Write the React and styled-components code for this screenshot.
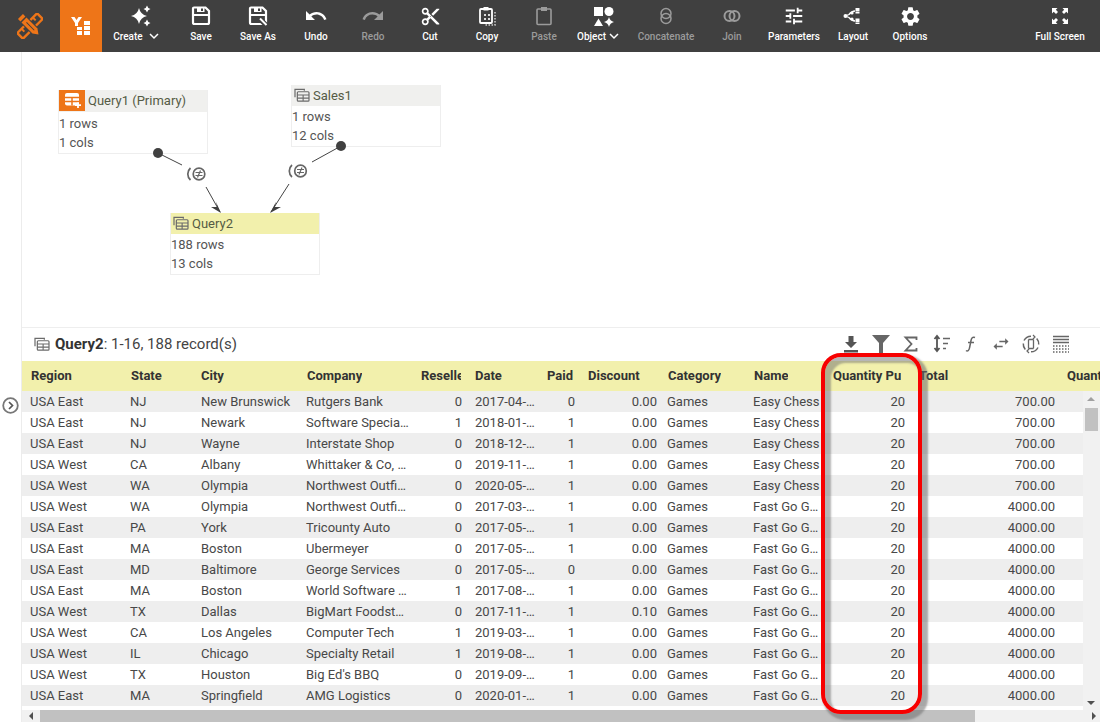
import React from 'react';
import styled, { createGlobalStyle } from 'styled-components';
import { MdUndo, MdRedo, MdContentCut, MdTune, MdSettings, MdSwapHoriz } from 'react-icons/md';

const Global = createGlobalStyle`
  html, body { margin: 0; padding: 0; background: #fff; }
  body { font-family: Roboto, "Liberation Sans", sans-serif; }
  * { box-sizing: border-box; }
`;

const Page = styled.div`
  position: relative; width: 1100px; height: 722px; overflow: hidden; display: flex; flex-direction: column;
`;
const Toolbar = styled.header`
  height: 52px; flex: none; background: #404040; display: flex; align-items: stretch;
`;
const LogoBox = styled.div`
  width: 60px; display: flex; align-items: center; justify-content: center;
`;
const HomeTab = styled.div`
  width: 42px; background: #ee7518; display: flex; align-items: center; justify-content: center;
`;
const Tool = styled.div`
  width: ${p => p.$w}px; flex: none; display: flex; flex-direction: column; align-items: center; padding-top: 5px;
  color: ${p => (p.$off ? '#9b9b9b' : '#fff')};
`;
const ToolIcon = styled.div`
  height: 22px; display: flex; align-items: center; justify-content: center; margin-left: ${p => p.$shift || 0}px;
`;
const ToolLabel = styled.div`
  margin-top: 2px; font-size: 10px; font-weight: 500; line-height: 15px; white-space: nowrap; display: flex; align-items: center; gap: ${p => p.$gap || 0}px;
`;
const Spacer = styled.div`flex: 1;`;
const Body = styled.div`flex: 1; display: flex; min-height: 0;`;
const Rail = styled.div`
  width: 22px; flex: none; border-right: 1px solid #ececec; position: relative;
`;
const RailToggle = styled.div`
  position: absolute; left: 2px; top: 345px; width: 17px; height: 17px; display: flex;
`;
const Main = styled.div`flex: 1; min-width: 0; display: flex; flex-direction: column;`;
const Canvas = styled.div`position: relative; height: 275px; flex: none;`;
const EdgeLayer = styled.svg`position: absolute; left: 0; top: 0; width: 100%; height: 100%; pointer-events: none;`;
const Node = styled.div`
  position: absolute; left: ${p => p.$x}px; top: ${p => p.$y}px; width: 150px;
  border: 1px solid #eeeeee; border-top: 0; background: #fff; font-size: 13px; color: #555;
  padding-bottom: 1px;
`;
const NodeHead = styled.div`
  height: ${p => p.$h}px; background: ${p => (p.$active ? '#f2f0ac' : '#f0f0ee')};
  display: flex; align-items: center; color: #555b45; line-height: 21px; padding-bottom: 1px;
  margin-bottom: ${p => p.$after}px;
`;
const NodeIconSlot = styled.div`
  width: ${p => (p.$orange ? 26 : 20)}px; height: 21px; flex: none; display: flex; align-items: center; justify-content: center;
  margin-right: ${p => (p.$orange ? 3 : 1)}px;
  background: ${p => (p.$orange ? '#ee7518' : 'transparent')};
`;
const NodeLine = styled.div`height: 19px; line-height: 19px;`;
const GridPanel = styled.section`flex: 1; min-height: 0; border-top: 1px solid #eeeeee; display: flex; flex-direction: column;`;
const TitleRow = styled.div`
  height: 33px; flex: none; display: flex; align-items: center; padding: 0 29px 2px 12px;
`;
const TitleText = styled.div`
  margin-left: 5px; font-size: 15px; color: #444; b { font-weight: 700; color: #333; }
`;
const GridTools = styled.div`margin-left: auto; display: flex; gap: 10px; color: #666;`;
const GridTool = styled.div`width: 20px; height: 20px; display: flex; align-items: center; justify-content: center;`;

const cols = '100px 71px 105px 115px 54px 72px 41px 79px 86px 80px 86px 149px 60px';
const HeadRow = styled.div`
  height: 30px; flex: none; background: #f2f0ac; display: grid; grid-template-columns: ${cols}; overflow: hidden;
  align-items: center; font-size: 13px; font-weight: 700; color: #333; padding-bottom: 2px;
`;
const HeadCell = styled.div`
  padding-left: ${p => p.$pl}px; padding-right: ${p => p.$pr}px; display: flex; min-width: 0;
`;
const HeadText = styled.span`
  white-space: nowrap; overflow: hidden; min-width: 0;
`;
const DataArea = styled.div`flex: 1; display: flex; min-height: 0;`;
const Rows = styled.div`flex: 1; min-width: 0;`;
const Row = styled.div`
  height: 21px; display: grid; grid-template-columns: ${cols}; background: ${p => (p.$odd ? '#eeeeee' : '#fff')};
  font-size: 13px; line-height: 21px; color: #484848;
`;
const Cell = styled.div`
  padding: 0 ${p => (p.$pr !== undefined ? p.$pr : 5)}px 0 8px; white-space: nowrap; overflow: hidden; text-overflow: ellipsis;
  text-align: ${p => (p.$num ? 'right' : 'left')};
`;
const VScroll = styled.div`
  width: 17px; flex: none; background: #f1f1f1; position: relative; margin-bottom: 4px; height: 319px;
`;
const VThumb = styled.div`
  position: absolute; left: 2px; top: 17px; width: 13px; height: 23px; background: #c1c1c1;
`;
const Arrow = styled.div`
  position: absolute; width: 0; height: 0; border-style: solid; border-color: transparent;
`;
const UpArrow = styled(Arrow)`left: 4px; top: 6px; border-width: 0 4px 4px; border-bottom-color: #a0a0a0;`;
const DownArrow = styled(Arrow)`left: 4px; bottom: 5px; border-width: 4px 4px 0; border-top-color: #505050;`;
const HScroll = styled.div`
  height: 12px; flex: none; background: #f1f1f1; position: relative; margin-top: -1px;
`;
const HThumb = styled.div`position: absolute; left: 18px; top: 0; width: 935px; height: 12px; background: #c1c1c1;`;
const LeftArrow = styled(Arrow)`left: 7px; top: 2px; border-width: 4px 4px 4px 0; border-right-color: #505050;`;
const RightArrow = styled(Arrow)`right: 4px; top: 2px; border-width: 4px 0 4px 4px; border-left-color: #505050;`;
const Callout = styled.div`
  position: absolute; left: 821px; top: 353px; width: 101px; height: 361px; border: 4px solid #f70000; border-radius: 20px;
  box-shadow: 4px 4px 2px 2px rgba(110,110,110,.55), inset 5px 5px 2px 1px rgba(110,110,110,.5);
  pointer-events: none;
`;

const Star = ({ cx, cy, r }) => (
  <path d={`M${cx} ${cy - r}Q${cx + r * .18} ${cy - r * .18} ${cx + r} ${cy}Q${cx + r * .18} ${cy + r * .18} ${cx} ${cy + r}Q${cx - r * .18} ${cy + r * .18} ${cx - r} ${cy}Q${cx - r * .18} ${cy - r * .18} ${cx} ${cy - r}Z`} fill="currentColor" />
);
const I = ({ s = 22, children, v = 24 }) => <svg width={s} height={s} viewBox={`0 0 ${v} ${v}`} fill="none">{children}</svg>;

const Logo = () => (
  <svg width="26" height="26" viewBox="0 0 26 26" fill="none">
    <g transform="rotate(45 13 13)" stroke="#ee7518" strokeWidth="2.400">
      <path d="M9 -1h8v28H9z" />
      <path d="M9 5h4M9 13h4M9 21h4" strokeWidth="2" />
    </g>
    <g transform="rotate(45 13 13)">
      <path d="M3 9.500H20l6 3.500-6 3.500H3z" fill="#404040" />
    </g>
    <g transform="rotate(-45 13 13)">
      <path d="M8.500 -1h9v21l-4.500 6-4.500-6z" fill="#404040" />
      <rect x="9.500" y="-0.500" width="7" height="3.500" fill="#ee7518" />
      <path d="M9.500 4.500h7V20l-3.500 5-3.500-5z" fill="#ee7518" />
      <path d="M13 8v11" stroke="#404040" strokeWidth="1" />
    </g>
  </svg>
);
const HomeIcon = () => (
  <svg width="22" height="20" viewBox="0 0 22 20">
    <rect x="14" y="5" width="6" height="4" fill="#fff" /><rect x="14" y="10" width="6" height="4" fill="#fff" /><rect x="14" y="15" width="6" height="4" fill="#fff" />
    <rect x="7" y="11" width="5" height="3" fill="#fff" /><rect x="7" y="15" width="5" height="4" fill="#fff" />
    <path d="M1 1h3.500l2 3 2-3H12L8 7v3H5V7z" fill="#fff" />
  </svg>
);
const Sparkles = () => (
  <svg width="22" height="22" viewBox="0 0 22 22" color="#fff">
    <Star cx={9} cy={11} r={8} /><Star cx={17} cy={4} r={3.500} /><Star cx={17} cy={18} r={3.500} />
  </svg>
);
const Floppy = ({ pen }) => (
  <I s={20} v={20}>
    <path d="M2 2.500a1 1 0 0 1 1-1h11.500L18 5v11.500a1.500 1.500 0 0 1-1.500 1.500h-13A1.500 1.500 0 0 1 2 16.500z" stroke="#fff" strokeWidth="2.200" fill="none" />
    <rect x="6" y="2" width="7.500" height="4" fill="#fff" /><rect x="10" y="2.500" width="2" height="2.500" fill="#404040" />
    <rect x="2" y="8" width="16" height="2" fill="#fff" />
    {pen && <><path d="M11 12l7 7" stroke="#404040" strokeWidth="5" /><path d="M12 12.500l6.500 6.500" stroke="#fff" strokeWidth="2" /></>}
  </I>
);
const Copy = () => (
  <I s={22} v={22}>
    <path d="M8 4H5a1 1 0 0 0-1 1v12a1 1 0 0 0 1 1h10a1 1 0 0 0 1-1V5a1 1 0 0 0-1-1h-3" stroke="#fff" strokeWidth="1.800" />
    <rect x="7.500" y="2" width="5" height="3.500" fill="#fff" />
    <path d="M8 9h2v2H8zM12 9h2v2h-2zM8 13h2v2H8zM12 13h2v2h-2z" fill="#ddd" />
    <path d="M19 7v13H8" stroke="#ccc" strokeWidth="1.500" strokeDasharray="1.500 1.500" />
  </I>
);
const Paste = () => (
  <I s={22} v={22}>
    <rect x="4" y="4" width="14" height="15.500" rx="1" stroke="currentColor" strokeWidth="1.600" />
    <rect x="8" y="2" width="6" height="4" fill="currentColor" />
  </I>
);
const Shapes = () => (
  <I s={21} v={21}>
    <rect x="1" y="1" width="9" height="9" fill="#fff" /><circle cx="16" cy="5.500" r="4.500" fill="#fff" />
    <path d="M1 20l4.500-7.500L10 20z" fill="#fff" /><g color="#fff"><Star cx={16} cy={16} r={5} /></g>
  </I>
);
const Concat = () => (
  <I s={22} v={22}>
    <ellipse cx="11" cy="8.500" rx="5" ry="5" stroke="currentColor" strokeWidth="1.500" /><ellipse cx="11" cy="13.500" rx="5" ry="5" stroke="currentColor" strokeWidth="1.500" />
  </I>
);
const JoinI = () => (
  <I s={22} v={22}>
    <circle cx="8.500" cy="11" r="5" stroke="currentColor" strokeWidth="2" /><circle cx="13.500" cy="11" r="5" stroke="currentColor" strokeWidth="2" />
  </I>
);
const LayoutI = () => (
  <I s={22} v={22}>
    <path d="M3 11l4-1.500C9 7 10 6 13 6M7 12.500C9 15 10 16 13 16M3 11l4 1.500" stroke="#fff" strokeWidth="1.300" />
    <circle cx="3.500" cy="11" r="2" fill="#fff" />
    <circle cx="10" cy="8" r="1.600" fill="#fff" /><circle cx="10" cy="14" r="1.600" fill="#fff" />
    <path d="M13.500 3h4v3.500h-4zM13.500 7h4v1.500h-4zM13.500 13.500h4v3.500h-4zM13.500 17.500h4V19h-4z" fill="#fff" />
  </I>
);
const FullI = () => (
  <I s={20} v={20}>
    <path d="M2 2h5.500L5.800 3.700 8 6 6 8 3.700 5.800 2 7.500zM18 2v5.500l-1.700-1.700L14 8l-2-2 2.200-2.300L12.500 2zM2 18v-5.500l1.700 1.700L6 12l2 2-2.200 2.300L7.500 18zM18 18h-5.500l1.700-1.700L12 14l2-2 2.300 2.200 1.700-1.700z" fill="#fff" />
  </I>
);
const Chevron = () => (
  <svg width="10" height="7" viewBox="0 0 10 7"><path d="M1 1l4 4 4-4" stroke="#fff" strokeWidth="1.500" fill="none" /></svg>
);
const TableIcon = ({ c = '#6b6b6b' }) => (
  <svg width="16" height="14" viewBox="0 0 17 15" fill="none">
    <path d="M1 10V1.500h10V3" stroke={c} strokeWidth="1.300" />
    <rect x="3.500" y="4" width="12.500" height="10" rx="1" stroke={c} strokeWidth="1.300" />
    <path d="M3.500 7.500H16M3.500 10.800H16M9.700 7.500V14" stroke={c} strokeWidth="1.200" />
  </svg>
);
const QueryIcon = () => (
  <svg width="20" height="17" viewBox="0 0 20 17" fill="none">
    <rect x="3" y="1" width="14" height="12.500" rx="2" fill="#fff" />
    <path d="M3 5.500h14M3 9.500h14M10 5.500v8" stroke="#ee7518" strokeWidth="1.500" />
    <path d="M16 10.500v5.500M13 13.200h6" stroke="#fff" strokeWidth="1.800" />
  </svg>
);

const Download = () => (
  <I s={18} v={18}><path d="M6.500 1h5v6H15l-6 6-6-6h3.500zM2 15h14v2.500H2z" fill="#555" /></I>
);
const Funnel = () => (
  <I s={20} v={20}><path d="M1 1h18l-7 8v10H8V9z" fill="#666" /></I>
);
const Sigma = () => <I s={18} v={18}><path d="M14.500 5V2.500H3.500l6 6.500-6 6.500h11V13" stroke="#666" strokeWidth="1.800" /></I>;
const SortI = () => (
  <I s={19} v={19}>
    <path d="M5 2.500v14M2.500 5L5 2l2.500 3M2.500 14L5 17l2.500-3" stroke="#555" strokeWidth="1.800" />
    <path d="M11 4.500h7M11 9.500h5M11 14.500h3" stroke="#666" strokeWidth="1.500" />
  </I>
);
const FnI = () => <I s={18} v={18}><path d="M13 2.500c-2.500-1-3.500.5-4 3L7.500 13c-.4 2.500-2 3.500-3.500 2.500M6 7.500h6" stroke="#666" strokeWidth="1.500" /></I>;
const SyncI = () => (
  <I s={20} v={20}>
    <path d="M3 6.500A8 8 0 0 1 10 2.200M17 13.500A8 8 0 0 1 10 17.800M2.300 9.500a8 8 0 0 0 2 6M17.700 10.500a8 8 0 0 0-2-6" stroke="#666" strokeWidth="1.500" />
    <path d="M7.500 5.500v9M12.500 5.500v9M7.500 5.500h5M7.500 14.500h5" stroke="#666" strokeWidth="1.300" />
    <path d="M12 1l2 2-2 2M8 15l-2 2 2 2" stroke="#666" strokeWidth="1.200" />
  </I>
);
const RowsI = () => (
  <I s={20} v={20}>
    <path d="M2 2.500h16M2 5.500h16M2 8.500h16" stroke="#666" strokeWidth="1.400" />
    <path d="M2 12h16M2 15h16M2 18h16" stroke="#666" strokeWidth="1.400" strokeDasharray="1.500 1.500" />
  </I>
);
const JoinMark = ({ x, y }) => (
  <g transform={`translate(${x} ${y})`} stroke="#666" fill="none" strokeWidth="1.700">
    <circle cx="0" cy="0" r="5.800" /><path d="M-8.500 -6A8 8 0 0 0 -8.500 6" />
    <path d="M-3.500 -1.500h7M-3.500 1.500h7M1.500 -3.500l-3 7" strokeWidth="1.200" />
  </g>
);

const tools = [
  { w: 68, label: 'Create', icon: <Sparkles />, caret: true, shift: 10 },
  { w: 62, label: 'Save', icon: <Floppy /> },
  { w: 52, label: 'Save As', icon: <Floppy pen /> },
  { w: 64, label: 'Undo', icon: <MdUndo size={24} /> },
  { w: 50, label: 'Redo', icon: <MdRedo size={24} />, off: true },
  { w: 64, label: 'Cut', icon: <MdContentCut size={21} /> },
  { w: 50, label: 'Copy', icon: <Copy /> },
  { w: 64, label: 'Paste', icon: <Paste />, off: true },
  { w: 44, label: 'Object', icon: <Shapes />, caret: true, shift: 10, gap: 3 },
  { w: 92, label: 'Concatenate', icon: <Concat />, off: true },
  { w: 40, label: 'Join', icon: <JoinI />, off: true },
  { w: 84, label: 'Parameters', icon: <MdTune size={22} /> },
  { w: 34, label: 'Layout', icon: <LayoutI /> },
  { w: 80, label: 'Options', icon: <MdSettings size={23} /> },
];

const headers = [
  ['Region', 9, 0], ['State', 9, 0], ['City', 8, 0], ['Company', 9, 0], ['Reseller', 8, 6], ['Date', 8, 0],
  ['Paid', 8, 0], ['Discount', 8, 0], ['Category', 9, 0], ['Name', 9, 0], ['Quantity Purchased', 8, 10], ['Total', 8, 0], ['Quantity', 7, 0],
];
const E = 'USA East', W = 'USA West', C = 'Easy Chess', F = 'Fast Go Game Set';
const data = [
  [E, 'NJ', 'New Brunswick', 'Rutgers Bank', 0, '2017-04-12', 0, '0.00', C, '700.00'],
  [E, 'NJ', 'Newark', 'Software Specialists', 1, '2018-01-12', 1, '0.00', C, '700.00'],
  [E, 'NJ', 'Wayne', 'Interstate Shop', 0, '2018-12-12', 1, '0.00', C, '700.00'],
  [W, 'CA', 'Albany', 'Whittaker & Co, Inc', 0, '2019-11-12', 1, '0.00', C, '700.00'],
  [W, 'WA', 'Olympia', 'Northwest Outfitters', 0, '2020-05-12', 1, '0.00', C, '700.00'],
  [W, 'WA', 'Olympia', 'Northwest Outfitters', 0, '2017-03-12', 1, '0.00', F, '4000.00'],
  [E, 'PA', 'York', 'Tricounty Auto', 0, '2017-05-12', 1, '0.00', F, '4000.00'],
  [E, 'MA', 'Boston', 'Ubermeyer', 0, '2017-05-12', 1, '0.00', F, '4000.00'],
  [E, 'MD', 'Baltimore', 'George Services', 0, '2017-05-12', 0, '0.00', F, '4000.00'],
  [E, 'MA', 'Boston', 'World Software Inc', 1, '2017-08-12', 1, '0.00', F, '4000.00'],
  [W, 'TX', 'Dallas', 'BigMart Foodstores', 0, '2017-11-12', 1, '0.10', F, '4000.00'],
  [W, 'CA', 'Los Angeles', 'Computer Tech', 1, '2019-03-12', 1, '0.00', F, '4000.00'],
  [W, 'IL', 'Chicago', 'Specialty Retail', 1, '2019-08-12', 1, '0.00', F, '4000.00'],
  [W, 'TX', 'Houston', "Big Ed's BBQ", 0, '2019-09-12', 1, '0.00', F, '4000.00'],
  [E, 'MA', 'Springfield', 'AMG Logistics', 0, '2020-01-12', 1, '0.00', F, '4000.00'],
];

const ox = 22, oy = 52;

export default function App() {
  return (
    <Page>
      <Global />
      <Toolbar>
        <LogoBox><Logo /></LogoBox>
        <HomeTab><HomeIcon /></HomeTab>
        {tools.map(t => (
          <Tool key={t.label} $w={t.w} $off={t.off}>
            <ToolIcon $shift={t.shift}>{t.icon}</ToolIcon>
            <ToolLabel $gap={t.gap || 6}>{t.label}{t.caret && <Chevron />}</ToolLabel>
          </Tool>
        ))}
        <Spacer />
        <Tool $w={80}>
          <ToolIcon><FullI /></ToolIcon>
          <ToolLabel>Full Screen</ToolLabel>
        </Tool>
      </Toolbar>
      <Body>
        <Rail>
          <RailToggle>
            <svg width="17" height="17" viewBox="0 0 17 17" fill="none">
              <circle cx="8.500" cy="8.500" r="7.300" stroke="#777" strokeWidth="1.800" />
              <path d="M7 5l3.500 3.500L7 12" stroke="#555" strokeWidth="1.700" />
            </svg>
          </RailToggle>
        </Rail>
        <Main>
          <Canvas>
            <Node $x={58 - ox} $y={90 - oy}>
              <NodeHead $h={22} $after={2}><NodeIconSlot $orange><QueryIcon /></NodeIconSlot>Query1 (Primary)</NodeHead>
              <NodeLine>1 rows</NodeLine>
              <NodeLine>1 cols</NodeLine>
            </Node>
            <Node $x={291 - ox} $y={85 - oy}>
              <NodeHead $h={21} $after={1}><NodeIconSlot><TableIcon /></NodeIconSlot>Sales1</NodeHead>
              <NodeLine>1 rows</NodeLine>
              <NodeLine>12 cols</NodeLine>
            </Node>
            <Node $x={170 - ox} $y={213 - oy}>
              <NodeHead $h={21} $after={1} $active><NodeIconSlot><TableIcon /></NodeIconSlot>Query2</NodeHead>
              <NodeLine>188 rows</NodeLine>
              <NodeLine>13 cols</NodeLine>
            </Node>
            <EdgeLayer viewBox="22 52 1078 275">
              <path d="M158 153L182 165M206 187L220 212" stroke="#444" strokeWidth="1" />
              <path d="M341 146L312 162M289 184L271 212" stroke="#444" strokeWidth="1" />
              <circle cx="158" cy="153" r="5" fill="#404040" />
              <circle cx="341" cy="146" r="5" fill="#404040" />
              <path d="M221 213L211 207L217 207L216 202Z" fill="#404040" />
              <path d="M270 213L281 207L275 207L276 202Z" fill="#404040" />
              <JoinMark x={199} y={174} />
              <JoinMark x={300.5} y={171} />
            </EdgeLayer>
          </Canvas>
          <GridPanel>
            <TitleRow>
              <TableIcon />
              <TitleText><b>Query2</b>: 1-16, 188 record(s)</TitleText>
              <GridTools>
                <GridTool><Download /></GridTool>
                <GridTool><Funnel /></GridTool>
                <GridTool><Sigma /></GridTool>
                <GridTool><SortI /></GridTool>
                <GridTool><FnI /></GridTool>
                <GridTool><MdSwapHoriz size={20} /></GridTool>
                <GridTool><SyncI /></GridTool>
                <GridTool><RowsI /></GridTool>
              </GridTools>
            </TitleRow>
            <HeadRow>
              {headers.map(([h, pl, pr]) => <HeadCell key={h} $pl={pl} $pr={pr}><HeadText>{h}</HeadText></HeadCell>)}
            </HeadRow>
            <DataArea>
              <Rows>
                {data.map((d, i) => (
                  <Row key={i} $odd={i % 2 === 0}>
                    <Cell>{d[0]}</Cell>
                    <Cell>{d[1]}</Cell>
                    <Cell>{d[2]}</Cell>
                    <Cell $pr={4}>{d[3]}</Cell>
                    <Cell $num>{d[4]}</Cell>
                    <Cell $pr={2}>{d[5]}</Cell>
                    <Cell $num>{d[6]}</Cell>
                    <Cell $num $pr={2}>{d[7]}</Cell>
                    <Cell>Games</Cell>
                    <Cell>{d[8]}</Cell>
                    <Cell $num $pr={6}>20</Cell>
                    <Cell $num>{d[9]}</Cell>
                  </Row>
                ))}
              </Rows>
              <VScroll><UpArrow /><VThumb /><DownArrow /></VScroll>
            </DataArea>
            <HScroll><LeftArrow /><HThumb /><RightArrow /></HScroll>
          </GridPanel>
        </Main>
      </Body>
      <Callout />
    </Page>
  );
}
